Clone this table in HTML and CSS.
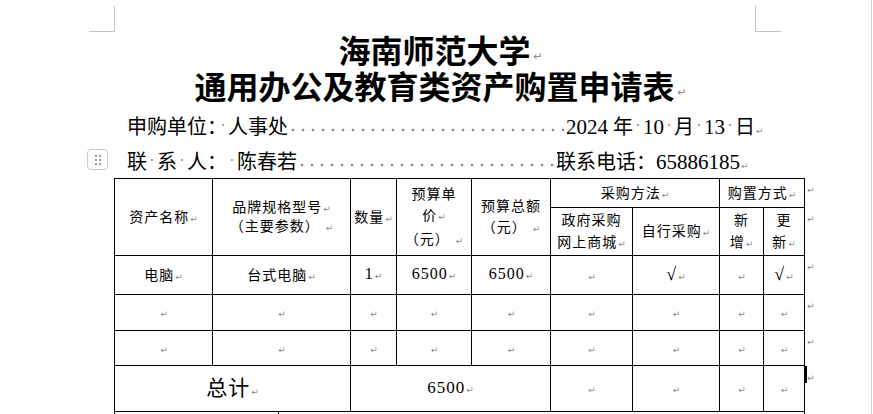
FILE: index.html
```html
<!DOCTYPE html>
<html lang="zh-CN">
<head>
<meta charset="utf-8">
<title>海南师范大学 通用办公及教育类资产购置申请表</title>
<link rel="stylesheet" href="styles.css">
</head>
<body>
<div class="viewport">
  <div class="crop crop-tl"></div>
  <div class="crop crop-tr"></div>
  <div class="page">
    <h1 class="title">
      <span class="tline"><span class="ttext">海南师范大学<i class="pm pm-title">↵</i></span></span>
      <span class="tline"><span class="ttext">通用办公及教育类资产购置申请表<i class="pm pm-title">↵</i></span></span>
    </h1>
    <div class="info">
      <p class="iline">申购单位<span class="colon-c">：</span><span class="sp">·</span>人事处<span class="lead lead-1"></span><span class="digits">2024</span><span class="gap"></span>年<span class="sp">·</span><span class="digits">10</span><span class="sp">·</span>月<span class="sp">·</span><span class="digits">13</span><span class="sp">·</span>日<i class="pm">↵</i></p>
      <p class="iline">联<span class="sp">·</span>系<span class="sp">·</span>人：<span class="sp">·</span>陈春若<span class="lead lead-2"></span>联系电话：<span class="digits">65886185</span><i class="pm">↵</i></p>
    </div>
    <div class="tablewrap">
      <div class="handle"><span></span><span></span><span></span><span></span><span></span><span></span></div>
      <table class="form">
        <colgroup>
          <col class="w-name"><col class="w-brand"><col class="w-qty"><col class="w-price"><col class="w-total"><col class="w-gov"><col class="w-self"><col class="w-new"><col class="w-upd"><col class="w-end">
        </colgroup>
        <tr class="r-h1">
          <td rowspan="2">资产名称<i class="pm">↵</i></td>
          <td rowspan="2" class="lh-16">品牌规格型号<i class="pm">↵</i><br>（主要参数）<i class="pm pm-gap">↵</i></td>
          <td rowspan="2">数量<i class="pm">↵</i></td>
          <td rowspan="2" class="lh-21">预算单<br>价<i class="pm">↵</i><br>（元）<i class="pm pm-gap">↵</i></td>
          <td rowspan="2" class="lh-21">预算总额<br>（元）<i class="pm pm-gap">↵</i></td>
          <td colspan="2">采购方法<i class="pm">↵</i></td>
          <td colspan="2">购置方式<i class="pm">↵</i></td>
          <td class="end"><i class="pm">↵</i></td>
        </tr>
        <tr class="r-h2">
          <td class="lh-22">政府采购<br>网上商城<i class="pm">↵</i></td>
          <td>自行采购<i class="pm">↵</i></td>
          <td class="lh-22">新<br>增<i class="pm">↵</i></td>
          <td class="lh-22">更<br>新<i class="pm">↵</i></td>
          <td class="end"><i class="pm">↵</i></td>
        </tr>
        <tr class="r-d1">
          <td>电脑<i class="pm">↵</i></td>
          <td>台式电脑<i class="pm">↵</i></td>
          <td class="num">1<i class="pm">↵</i></td>
          <td class="num">6500<i class="pm">↵</i></td>
          <td class="num">6500<i class="pm">↵</i></td>
          <td><i class="pm">↵</i></td>
          <td class="check">√<i class="pm">↵</i></td>
          <td><i class="pm">↵</i></td>
          <td class="check">√<i class="pm">↵</i></td>
          <td class="end"><i class="pm">↵</i></td>
        </tr>
        <tr class="r-d2">
          <td><i class="pm">↵</i></td>
          <td><i class="pm">↵</i></td>
          <td><i class="pm">↵</i></td>
          <td><i class="pm">↵</i></td>
          <td><i class="pm">↵</i></td>
          <td><i class="pm">↵</i></td>
          <td><i class="pm">↵</i></td>
          <td><i class="pm">↵</i></td>
          <td><i class="pm">↵</i></td>
          <td class="end"><i class="pm">↵</i></td>
        </tr>
        <tr class="r-d3">
          <td><i class="pm">↵</i></td>
          <td><i class="pm">↵</i></td>
          <td><i class="pm">↵</i></td>
          <td><i class="pm">↵</i></td>
          <td><i class="pm">↵</i></td>
          <td><i class="pm">↵</i></td>
          <td><i class="pm">↵</i></td>
          <td><i class="pm">↵</i></td>
          <td><i class="pm">↵</i></td>
          <td class="end"><i class="pm">↵</i></td>
        </tr>
        <tr class="r-total">
          <td colspan="2" class="total-label">总计<i class="pm">↵</i></td>
          <td colspan="3" class="total-num">6500<i class="pm">↵</i></td>
          <td><i class="pm">↵</i></td>
          <td><i class="pm">↵</i></td>
          <td><i class="pm">↵</i></td>
          <td><i class="pm">↵</i></td>
          <td class="end"><span class="caret"></span><i class="pm pm-caret">↵</i></td>
        </tr>
      </table>
      <div class="tail"><div class="tail-cell"></div></div>
    </div>
  </div>
</div>
</body>
</html>
```

FILE: styles.css
```css
* {
  box-sizing: border-box;
}

html,
body {
  margin: 0;
  padding: 0;
  background: #ffffff;
}

body {
  font-family: "Liberation Serif", "Noto Sans CJK SC", serif;
  color: #000000;
}

.viewport {
  position: relative;
  width: 872px;
  height: 414px;
  overflow: hidden;
  border-right: 1px solid #cfcfcf;
}

.crop {
  position: absolute;
  top: 6px;
  width: 26px;
  height: 26px;
  border-bottom: 1px solid #c3c3c3;
}

.crop-tl {
  left: 89px;
  border-right: 1px solid #c3c3c3;
}

.crop-tr {
  left: 755px;
  border-left: 1px solid #c3c3c3;
}

.page {
  padding: 31px 0 0 114px;
}

/* paragraph marks */
.pm {
  font-style: normal;
  font-family: "DejaVu Sans", sans-serif;
  font-size: 9px;
  color: #8c8c8c;
  letter-spacing: 0;
  font-weight: normal;
  margin-left: 1px;
}

.pm-gap {
  margin-left: 6px;
}

/* title */
.title {
  width: 641px;
  margin: 0;
  font-family: "Noto Sans CJK SC", sans-serif;
  font-weight: bold;
  font-size: 32px;
  line-height: 36px;
  text-align: center;
}

.tline {
  display: block;
  height: 36px;
}

.ttext {
  position: relative;
  display: inline-block;
}

.pm-title {
  position: absolute;
  left: 100%;
  bottom: 5px;
  font-size: 11px;
  line-height: 11px;
  margin-left: 3px;
}

/* info lines */
.info {
  padding: 5px 0 0 13px;
  font-size: 20px;
  line-height: 35px;
}

.iline {
  margin: 0;
  height: 35px;
  white-space: nowrap;
  font-family: "Noto Sans CJK SC", sans-serif;
}

.digits {
  font-family: "Liberation Serif", serif;
  font-size: 21px;
}

.colon-c {
  letter-spacing: -9px;
}

.sp {
  display: inline-block;
  width: 10px;
  text-align: center;
  color: #8c8c8c;
  font-family: "Liberation Serif", serif;
  font-size: 16px;
  vertical-align: top;
}

.gap {
  display: inline-block;
  width: 5px;
}

.lead {
  display: inline-block;
  height: 10px;
  vertical-align: middle;
  background-image: radial-gradient(circle, #8c8c8c 1.1px, rgba(140, 140, 140, 0) 1.7px);
  background-size: 10px 10px;
  background-repeat: repeat-x;
  background-position: 0 1px;
}

.lead-1 {
  width: 278px;
}

.lead-2 {
  width: 259px;
}

/* table */
.tablewrap {
  position: relative;
  width: 720px;
}

.handle {
  position: absolute;
  left: -27px;
  top: -29px;
  width: 21px;
  height: 21px;
  border: 1px solid #c8c8c8;
  border-radius: 4px;
  background: #ffffff;
  display: grid;
  grid-template-columns: 2px 2px;
  grid-template-rows: 2px 2px 2px;
  column-gap: 2px;
  row-gap: 2px;
  justify-content: center;
  align-content: center;
}

.handle span {
  background: #9a9a9a;
}

.form {
  border-collapse: collapse;
  table-layout: fixed;
  width: 714px;
  font-size: 14px;
  letter-spacing: 1px;
}

.form td {
  border: 1px solid #000000;
  padding: 0;
  text-align: center;
  vertical-align: middle;
  line-height: 18px;
  font-family: "Noto Sans CJK SC", sans-serif;
}

.w-name { width: 98px; }
.w-brand { width: 138px; }
.w-qty { width: 46px; }
.w-price { width: 75px; }
.w-total { width: 79px; }
.w-gov { width: 82px; }
.w-self { width: 87px; }
.w-new { width: 44px; }
.w-upd { width: 41px; }
.w-end { width: 24px; }

.r-h1 { height: 29px; }
.r-h2 { height: 47px; }
.r-d1 { height: 39px; }
.r-d2 { height: 36px; }
.r-d3 { height: 35px; }
.r-total { height: 46px; }

.form td.lh-16 { line-height: 16px; }
.form td.lh-21 { line-height: 21px; }
.form td.lh-22 { line-height: 22px; }

.form td.num {
  font-family: "Liberation Serif", serif;
  font-size: 16px;
  letter-spacing: 1px;
}

.form td.check {
  font-family: "Liberation Serif", serif;
  font-size: 18px;
}

.form td.total-label {
  font-size: 21px;
  letter-spacing: 1px;
}

.form td.total-num {
  font-family: "Liberation Serif", serif;
  font-size: 17px;
  letter-spacing: 1px;
}

.form td.end {
  border: none;
  text-align: left;
  vertical-align: top;
  line-height: 10px;
  padding-top: 3px;
}

.form td.end .pm {
  margin-left: 2px;
}

.caret {
  display: inline-block;
  width: 3px;
  height: 17px;
  margin-left: -1px;
  margin-top: -3px;
  background: #000000;
  vertical-align: top;
}

.form td.end .pm-caret {
  margin-left: 0;
  vertical-align: top;
  position: relative;
  top: 4px;
}

.tail {
  display: flex;
  width: 691px;
  height: 12px;
  border-left: 1px solid #000000;
  border-right: 1px solid #000000;
}

.tail-cell {
  width: 164px;
  border-right: 1px solid #000000;
}
```
